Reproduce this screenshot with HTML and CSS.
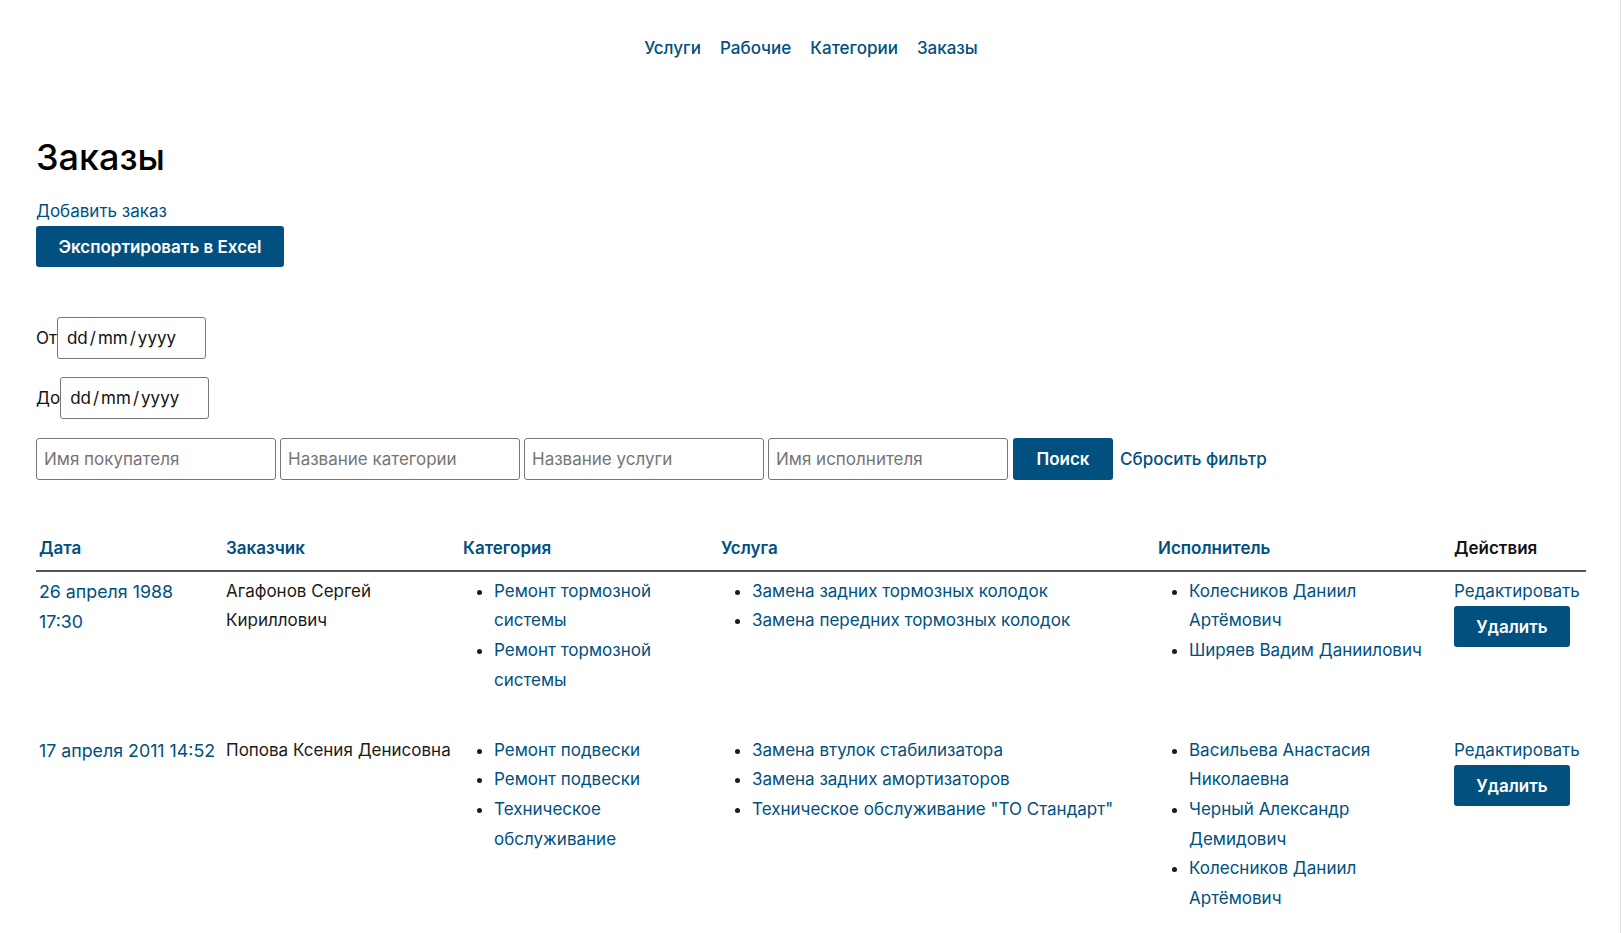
FILE: index.html
```html
<!DOCTYPE html>
<html lang="ru">
<head>
<meta charset="utf-8">
<title>Заказы</title>
<link rel="stylesheet" href="styles.css">
</head>
<body>
<div class="page">
  <nav class="nav">
    <ul class="nav-list">
      <li><a href="#">Услуги</a></li>
      <li><a href="#">Рабочие</a></li>
      <li><a href="#">Категории</a></li>
      <li><a href="#">Заказы</a></li>
    </ul>
  </nav>

  <main class="content">
    <h1 class="title">Заказы</h1>
    <a class="add-link" href="#">Добавить заказ</a>
    <button class="btn btn-export" type="button">Экспортировать в Excel</button>

    <form class="filters">
      <div class="date-row">
        <label class="date-label">От</label>
        <div class="date-input">dd<span class="sep">/</span>mm<span class="sep">/</span>yyyy</div>
      </div>
      <div class="date-row">
        <label class="date-label">До</label>
        <div class="date-input">dd<span class="sep">/</span>mm<span class="sep">/</span>yyyy</div>
      </div>
      <div class="search-row">
        <input class="text-input" type="text" placeholder="Имя покупателя">
        <input class="text-input" type="text" placeholder="Название категории">
        <input class="text-input" type="text" placeholder="Название услуги">
        <input class="text-input" type="text" placeholder="Имя исполнителя">
        <button class="btn btn-search" type="button">Поиск</button>
        <a class="reset-link" href="#">Сбросить фильтр</a>
      </div>
    </form>

    <table class="orders">
      <thead>
        <tr>
          <th class="col-date"><a href="#">Дата</a></th>
          <th class="col-customer"><a href="#">Заказчик</a></th>
          <th class="col-category"><a href="#">Категория</a></th>
          <th class="col-service"><a href="#">Услуга</a></th>
          <th class="col-executor"><a href="#">Исполнитель</a></th>
          <th class="col-actions">Действия</th>
        </tr>
      </thead>
      <tbody>
        <tr>
          <td><a class="date-link" href="#">26 апреля 1988 17:30</a></td>
          <td>Агафонов Сергей Кириллович</td>
          <td>
            <ul class="cell-list">
              <li><a href="#">Ремонт тормозной системы</a></li>
              <li><a href="#">Ремонт тормозной системы</a></li>
            </ul>
          </td>
          <td>
            <ul class="cell-list">
              <li><a href="#">Замена задних тормозных колодок</a></li>
              <li><a href="#">Замена передних тормозных колодок</a></li>
            </ul>
          </td>
          <td>
            <ul class="cell-list">
              <li><a href="#">Колесников Даниил Артёмович</a></li>
              <li><a href="#">Ширяев Вадим Даниилович</a></li>
            </ul>
          </td>
          <td>
            <a class="edit-link" href="#">Редактировать</a>
            <button class="btn btn-delete" type="button">Удалить</button>
          </td>
        </tr>
        <tr>
          <td><a class="date-link" href="#">17 апреля 2011 14:52</a></td>
          <td>Попова Ксения Денисовна</td>
          <td>
            <ul class="cell-list">
              <li><a href="#">Ремонт подвески</a></li>
              <li><a href="#">Ремонт подвески</a></li>
              <li><a href="#">Техническое обслуживание</a></li>
            </ul>
          </td>
          <td>
            <ul class="cell-list">
              <li><a href="#">Замена втулок стабилизатора</a></li>
              <li><a href="#">Замена задних амортизаторов</a></li>
              <li><a href="#">Техническое обслуживание "ТО Стандарт"</a></li>
            </ul>
          </td>
          <td>
            <ul class="cell-list">
              <li><a href="#">Васильева Анастасия Николаевна</a></li>
              <li><a href="#">Черный Александр Демидович</a></li>
              <li><a href="#">Колесников Даниил Артёмович</a></li>
            </ul>
          </td>
          <td>
            <a class="edit-link" href="#">Редактировать</a>
            <button class="btn btn-delete" type="button">Удалить</button>
          </td>
        </tr>
      </tbody>
    </table>
  </main>
  <div class="scroll-edge"></div>
</div>
</body>
</html>
```

FILE: styles.css
```css
* { box-sizing: border-box; }

html, body {
  margin: 0;
  padding: 0;
  background: #fff;
}

body {
  font-family: Inter, Roboto, "Noto Sans", sans-serif;
  font-size: 17px;
  color: #1a1a1a;
}

a {
  color: #005080;
  text-decoration: none;
}

.page {
  padding: 0 36px;
}

.scroll-edge {
  position: fixed;
  top: 0;
  right: 1px;
  width: 1px;
  height: 100%;
  background: #e4e4e4;
}

/* nav */
.nav {
  padding-top: 36px;
}
.nav-list {
  list-style: none;
  margin: 0;
  padding: 0;
  display: flex;
  justify-content: center;
  gap: 19px;
  line-height: 24px;
  font-size: 17px;
  font-weight: 500;
}

/* header */
.title {
  margin: 75px 0 0;
  font-size: 36px;
  line-height: 44px;
  font-weight: 500;
  color: #000;
}

.add-link {
  display: block;
  margin-top: 20px;
  line-height: 24px;
  width: max-content;
}

.btn {
  font-family: inherit;
  font-size: 17px;
  font-weight: 600;
  color: #fff;
  background: #02507f;
  border: none;
  border-radius: 3px;
  cursor: pointer;
}

.btn-export {
  display: block;
  margin-top: 3px;
  height: 41px;
  width: 248px;
  padding: 0;
}

/* filters */
.filters {
  margin-top: 50px;
  display: flex;
  flex-direction: column;
  gap: 18px;
}

.date-row {
  display: flex;
  align-items: center;
}

.date-label {
  line-height: 24px;
  color: #111;
}

.date-input {
  width: 149px;
  height: 42px;
  border: 1px solid #767676;
  border-radius: 3px;
  padding: 0 9px;
  display: flex;
  align-items: center;
  color: #111;
  font-size: 17px;
}

.date-input .sep {
  padding: 0 2px;
}

.search-row {
  display: flex;
  align-items: center;
  gap: 4px;
  margin-top: 1px;
}

.text-input {
  width: 240px;
  height: 42px;
  border: 1px solid #767676;
  border-radius: 3px;
  padding: 0 7px;
  font-family: inherit;
  font-size: 17px;
  color: #111;
}
.text-input::placeholder {
  color: #757575;
}

.btn-search {
  height: 42px;
  width: 100px;
  margin-left: 1px;
}

.reset-link {
  margin-left: 3px;
  font-weight: 500;
}

/* table */
.orders {
  margin-top: 51px;
  width: 100%;
  border-collapse: collapse;
  table-layout: fixed;
  line-height: 29.7px;
}

.orders th {
  text-align: left;
  font-weight: 600;
  padding: 3px 3px 6px;
  border-bottom: 2px solid #555;
  color: #111;
}

.orders td {
  vertical-align: top;
  padding: 5px 3px 35px;
  color: #1a1a1a;
}

.col-date { width: 187px; }
.col-customer { width: 237px; }
.col-category { width: 258px; }
.col-service { width: 437px; }
.col-executor { width: 296px; }

.date-link {
  font-size: 17.8px;
}

.cell-list {
  margin: 0;
  padding-left: 31px;
}
.cell-list li::marker {
  color: #1a1a1a;
}

.edit-link {
  display: block;
}

.btn-delete {
  display: block;
  height: 41px;
  width: 116px;
  padding: 0;
}
```
